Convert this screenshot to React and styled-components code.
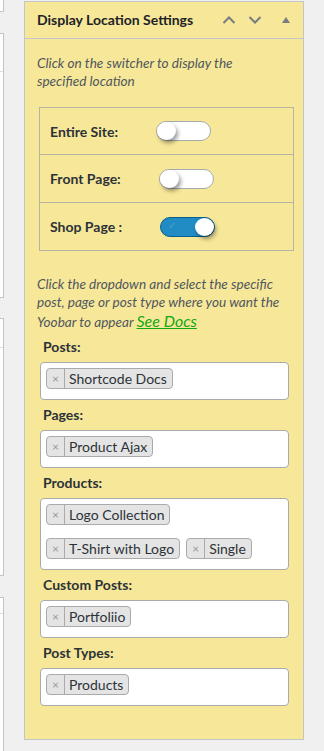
import React from 'react';
import styled, { createGlobalStyle } from 'styled-components';

const GlobalStyle = createGlobalStyle`
  html, body {
    margin: 0;
    padding: 0;
    background: #f0f0f1;
    font-family: Lato, "Liberation Sans", sans-serif;
    color: #2c3338;
  }
`;

// page frame: cut-off white boxes on the left, the metabox on the right
const Page = styled.div`
  display: flex;
  align-items: flex-start;
  width: 324px;
  height: 751px;
  overflow: hidden;
`;

const LeftColumn = styled.div`
  width: 4px;
  display: flex;
  flex-direction: column;
  margin-top: -1px;
`;

const LeftBox = styled.div`
  background: #fff;
  border: 1px solid #c3c4c7;
  border-left: none;
  height: ${p => p.h}px;
  margin-bottom: ${p => p.gap || 0}px;
  display: flex;
  flex-direction: column;
`;

const LeftRule = styled.div`
  height: ${p => p.h}px;
  border-bottom: 1px solid #dcdcde;
`;

const Panel = styled.div`
  margin: 1px 0 0 20px;
  width: 278px;
  height: 737px;
  background: #f7e799;
  border: 1px solid #c3c4c7;
  display: flex;
  flex-direction: column;
`;

const Header = styled.div`
  height: 36px;
  display: flex;
  align-items: center;
  padding: 0 0 0 12px;
  border-bottom: 1px solid #c3c4c7;
`;

const Title = styled.h2`
  flex: 1;
  margin: 0 0 1px 0;
  font-size: 14px;
  font-weight: 700;
  color: #1d2327;
`;

const HeaderButton = styled.span`
  width: ${p => p.w || 26}px;
  height: 36px;
  display: flex;
  align-items: center;
  justify-content: center;
  color: #787c82;
`;

const Body = styled.div`
  padding: 12px 12px 0 12px;
  display: flex;
  flex-direction: column;
`;

const Note = styled.p`
  margin: ${p => p.m || '0'};
  max-width: ${p => p.w || 253}px;
  font-size: 13.6px;
  font-style: italic;
  line-height: 18px;
  color: #50575e;
`;

const DocsLink = styled.a`
  display: inline-block;
  font-size: 16px;
  line-height: 20px;
  color: #11a811;
  text-decoration: underline;
`;

const SwitchTable = styled.div`
  margin: 17px 0 0 2px;
  width: 253px;
  border: 1px solid #b7b4a6;
  display: flex;
  flex-direction: column;
`;

const SwitchRow = styled.div`
  height: ${p => p.h || 47}px;
  display: flex;
  align-items: center;
  padding: 0 0 0 10px;
  border-top: ${p => (p.first ? 'none' : '1px solid #b7b4a6')};
`;

const SwitchLabel = styled.span`
  font-size: 14px;
  font-weight: 700;
  color: #2c3338;
  margin-right: 38px;
`;

const Track = styled.span`
  position: relative;
  width: 53px;
  height: 18px;
  border-radius: 10px;
  border: 1px solid ${p => (p.on ? '#0b5f8e' : '#a7aaad')};
  background: ${p => (p.on ? '#218bc4' : '#fff')};
  display: inline-block;
`;

const Knob = styled.span`
  position: absolute;
  top: 0;
  left: ${p => (p.on ? '34px' : '0')};
  width: 19px;
  height: 18px;
  border-radius: 50%;
  background: #fff;
  box-shadow: 2px 3px 4px rgba(0, 0, 0, 0.4);
`;

const Check = styled.span`
  position: absolute;
  left: 7px;
  top: 1px;
  font-size: 10px;
  color: #4d9fd0;
`;

const FieldLabel = styled.div`
  margin: ${p => p.m || '6px'} 0 0 6px;
  font-size: 14px;
  font-weight: 700;
  color: #2c3338;
  line-height: 18px;
`;

const SelectBox = styled.div`
  margin: 6px 0 0 3px;
  width: 236px;
  padding: 5px 6px 10px 5px;
  background: #fff;
  border: 1px solid #aaa;
  border-radius: 4px;
  display: flex;
  flex-wrap: wrap;
  column-gap: 6px;
  row-gap: 13px;
`;

const Tag = styled.span`
  height: 19px;
  display: inline-flex;
  align-items: center;
  background: #e4e4e4;
  border: 1px solid #aaa;
  border-radius: 4px;
  font-size: 14px;
  color: #2c3338;
`;

const TagRemove = styled.span`
  width: 17px;
  height: 100%;
  display: flex;
  align-items: center;
  justify-content: center;
  border-right: 1px solid #aaa;
  color: #999;
  font-size: 12px;
`;

const TagText = styled.span`
  padding: 0 5px 0 4px;
`;

const Switch = ({ on }) => (
  <Track on={on ? 1 : 0}>
    {on && <Check>✓</Check>}
    <Knob on={on ? 1 : 0} />
  </Track>
);

const Field = ({ label, items, m }) => (
  <>
    <FieldLabel m={m}>{label}</FieldLabel>
    <SelectBox>
      {items.map(t => (
        <Tag key={t}>
          <TagRemove>×</TagRemove>
          <TagText>{t}</TagText>
        </Tag>
      ))}
    </SelectBox>
  </>
);

const Chevron = ({ up }) => (
  <svg width="14" height="10" viewBox="0 0 14 10">
    <path
      d={up ? 'M1.5 8 L7 2.5 L12.5 8' : 'M1.5 2 L7 7.5 L12.5 2'}
      fill="none"
      stroke="currentColor"
      strokeWidth="2"
    />
  </svg>
);

export default function App() {
  return (
    <Page>
      <GlobalStyle />
      <LeftColumn>
        <LeftBox h={11} gap={21} />
        <LeftBox h={263} gap={20}>
          <LeftRule h={37} />
        </LeftBox>
        <LeftBox h={256} gap={21}>
          <LeftRule h={28} />
        </LeftBox>
        <LeftBox h={200}>
          <LeftRule h={15} />
        </LeftBox>
      </LeftColumn>
      <Panel>
        <Header>
          <Title>Display Location Settings</Title>
          <HeaderButton>
            <Chevron up />
          </HeaderButton>
          <HeaderButton>
            <Chevron />
          </HeaderButton>
          <HeaderButton w={35}>
            <svg width="8" height="6" viewBox="0 0 8 6">
              <path d="M4 0 L8 6 L0 6 Z" fill="currentColor" />
            </svg>
          </HeaderButton>
        </Header>
        <Body>
          <Note m="3px 0 0 0" w={225}>
            Click on the switcher to display the specified location
          </Note>
          <SwitchTable>
            <SwitchRow first h={46}>
              <SwitchLabel>Entire Site:</SwitchLabel>
              <Switch />
            </SwitchRow>
            <SwitchRow>
              <SwitchLabel>Front Page:</SwitchLabel>
              <Switch />
            </SwitchRow>
            <SwitchRow>
              <SwitchLabel>Shop Page :</SwitchLabel>
              <Switch on />
            </SwitchRow>
          </SwitchTable>
          <Note m="24px 0 0 0">
            Click the dropdown and select the specific post, page or post type
            where you want the Yoobar to appear <DocsLink href="#">See Docs</DocsLink>
          </Note>
          <Field label="Posts:" items={['Shortcode Docs']} m="7px" />
          <Field label="Pages:" items={['Product Ajax']} />
          <Field
            label="Products:"
            items={['Logo Collection', 'T-Shirt with Logo', 'Single']}
          />
          <Field label="Custom Posts:" items={['Portfoliio']} />
          <Field label="Post Types:" items={['Products']} />
        </Body>
      </Panel>
    </Page>
  );
}
